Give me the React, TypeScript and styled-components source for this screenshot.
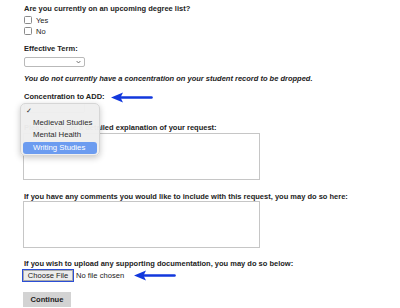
import * as React from 'react';
import styled, { createGlobalStyle } from 'styled-components';

const GlobalStyle = createGlobalStyle`
  html, body {
    margin: 0;
    padding: 0;
    background: #ffffff;
  }
  body {
    font-family: "Liberation Sans", Arial, sans-serif;
    font-size: 7.5px;
    color: #222222;
  }
`;

const Page = styled.form`
  width: 400px;
  height: 308px;
  box-sizing: border-box;
  padding: 4px 0 0 23px;
  display: flex;
  flex-direction: column;
  align-items: flex-start;
  overflow: hidden;
`;

const Label = styled.div<{ $top?: number }>`
  font-weight: 700;
  line-height: 9px;
  height: 9px;
  margin-top: ${p => p.$top || 0}px;
  padding-left: 1px;
  white-space: nowrap;
  display: flex;
  align-items: center;
`;

const Notice = styled(Label)`
  font-style: italic;
`;

const CheckRow = styled.label<{ $top?: number }>`
  display: flex;
  align-items: center;
  gap: 4px;
  height: 11px;
  margin-top: ${p => p.$top || 0}px;
  padding-left: 1px;
  line-height: 11px;
`;

const Box = styled.span`
  width: 6px;
  height: 6px;
  border: 1px solid #8a8a8a;
  border-radius: 1.5px;
  background: #fff;
`;

const SelectBox = styled.div<{ $top?: number }>`
  margin-top: ${p => p.$top || 0}px;
  margin-left: 1px;
  width: 56px;
  height: 8px;
  border: 1px solid #b9b9b9;
  border-radius: 2px;
  background: #fff;
  display: flex;
  justify-content: flex-end;
  align-items: center;
  padding-right: 3px;
`;

const SelectArea = styled.div`
  position: relative;
  height: 10px;
  margin-top: 2.5px;
`;

const Popup = styled.ul`
  position: absolute;
  left: -3px;
  top: 0;
  width: 74px;
  margin: 0;
  padding: 1px 2px;
  list-style: none;
  background: rgba(238, 238, 238, 0.97);
  border: 1px solid #d6d6d6;
  border-radius: 5px;
  box-shadow: 0 2px 6px rgba(0, 0, 0, 0.22);
  font-size: 7.8px;
  color: #2c2c2c;
  z-index: 2;
`;

const Option = styled.li<{ $active?: boolean }>`
  height: 12px;
  line-height: 12px;
  padding-left: 10px;
  position: relative;
  border-radius: 3px;
  background: ${p => (p.$active ? '#6c9cf0' : 'transparent')};
  color: ${p => (p.$active ? '#ffffff' : 'inherit')};
  margin-top: ${p => (p.$active ? 1 : 0)}px;
`;

const Check = styled.span`
  position: absolute;
  left: 3px;
  top: 0;
  font-size: 7px;
`;

const TextArea = styled.div<{ $top?: number }>`
  margin-top: ${p => p.$top || 0}px;
  width: 235px;
  height: 45px;
  border: 1px solid #c6c6c6;
  background: #fff;
`;

const FileRow = styled.div`
  display: flex;
  align-items: center;
  height: 13px;
  margin-top: 1.5px;
  margin-left: -1px;
`;

const FileButton = styled.button`
  box-sizing: border-box;
  height: 13px;
  width: 52px;
  padding: 0;
  font-family: inherit;
  font-size: 7.6px;
  color: #222;
  background: #ececec;
  border: 1px solid #ffffff;
  outline: 1.5px solid #2b4ed6;
  outline-offset: -1.5px;
  box-shadow: inset 0 0 0 1px #a9a9a9;
`;

const FileText = styled.span`
  margin-left: 2px;
  font-size: 7.6px;
`;

const Continue = styled.button`
  margin-top: 10px;
  width: 48px;
  height: 15px;
  padding: 0;
  border: none;
  background: #d3d3d3;
  font-family: inherit;
  font-weight: 700;
  font-size: 7.6px;
  color: #222;
`;

const Arrow = ({ gap, drop }: { gap: number; drop: number }) => (
  <svg
    width="42"
    height="11"
    viewBox="0 0 42 11"
    style={{ marginLeft: gap, marginTop: drop, flexShrink: 0 }}
  >
    <path d="M10 5.5 H40.5" stroke="#1238dd" strokeWidth="2.6" strokeLinecap="round" />
    <path d="M0 5.5 L12 0.4 L9.5 5.5 L12 10.6 Z" fill="#1238dd" />
  </svg>
);

const Chevron = () => (
  <svg width="5" height="4" viewBox="0 0 5 4">
    <path d="M0.6 1 L2.5 3 L4.4 1" stroke="#555" strokeWidth="0.8" fill="none" />
  </svg>
);

const concentrations = ['Medieval Studies', 'Mental Health', 'Writing Studies'];

export default function App() {
  return (
    <React.Fragment>
      <GlobalStyle />
      <Page>
        <Label>Are you currently on an upcoming degree list?</Label>
        <CheckRow $top={1.5}>
          <Box />
          Yes
        </CheckRow>
        <CheckRow>
          <Box />
          No
        </CheckRow>

        <Label $top={7}>Effective Term:</Label>
        <SelectBox $top={4.5}>
          <Chevron />
        </SelectBox>

        <Notice $top={6.5}>
          You do not currently have a concentration on your student record to be dropped.
        </Notice>

        <Label $top={9}>
          Concentration to ADD:
          <Arrow gap={6} drop={2} />
        </Label>
        <SelectArea>
          <SelectBox />
          <Popup>
            <Option>
              <Check>✓</Check>
            </Option>
            {concentrations.map(c => (
              <Option key={c} $active={c === 'Writing Studies'}>
                {c}
              </Option>
            ))}
          </Popup>
        </SelectArea>

        <Label $top={10}>Please provide a detailed explanation of your request:</Label>
        <TextArea $top={1} />

        <Label $top={11.5}>
          If you have any comments you would like to include with this request, you may do so here:
        </Label>
        <TextArea $top={0.5} />

        <Label $top={10.5}>
          If you wish to upload any supporting documentation, you may do so below:
        </Label>
        <FileRow>
          <FileButton type="button">Choose File</FileButton>
          <FileText>No file chosen</FileText>
          <Arrow gap={10} drop={0} />
        </FileRow>

        <Continue type="button">Continue</Continue>
      </Page>
    </React.Fragment>
  );
}
